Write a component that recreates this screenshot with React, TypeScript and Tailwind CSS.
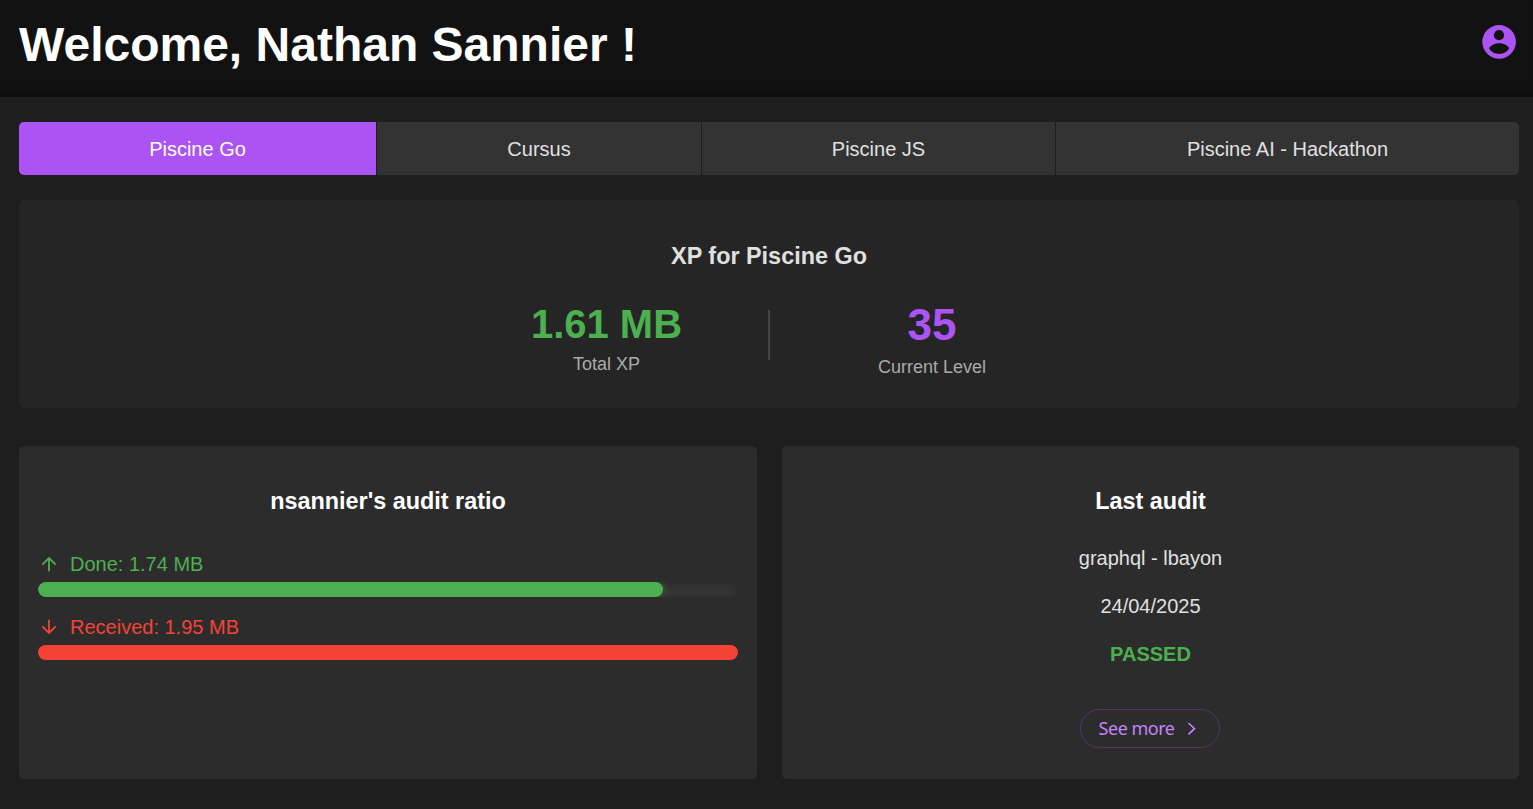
import { MdArrowUpward, MdArrowDownward } from 'react-icons/md';

const tabs = [
  { label: 'Piscine Go', cls: 'w-[358px] bg-[#ab54f3] text-white rounded-l-[5px]' },
  { label: 'Cursus', cls: 'w-[325px] bg-[#333333]' },
  { label: 'Piscine JS', cls: 'w-[354px] bg-[#333333]' },
  { label: 'Piscine AI - Hackathon', cls: 'w-[463px] bg-[#333333] rounded-r-[5px] border-r-0' },
];

export default function App() {
  return (
    <div className="h-[809px] overflow-hidden bg-[#1e1e1e] font-['Liberation_Sans',Arial,sans-serif] text-[#e0e0e0]">
      <header className="flex h-[97px] items-start justify-between bg-[#121212] pr-[14px] pl-[19px] shadow-[inset_0_-10px_10px_-8px_rgba(0,0,0,0.35)]">
        <h1 className="pt-[9px] text-[48px] leading-[72px] font-bold text-white">Welcome, Nathan Sannier !</h1>
        <svg viewBox="0 0 40 40" className="mt-[22px] size-[40px]">
          <circle cx="20.1" cy="19.9" r="16.8" fill="#ab54f3" />
          <circle cx="20" cy="13.2" r="5.1" fill="#121212" />
          <path d="M10 26.3 C12 22.8 16 21.3 20.1 21.3 C24.2 21.3 28.2 22.8 30.2 26.3 C28.2 30 24.2 32 20.1 32 C16 32 12 30 10 26.3Z" fill="#121212" />
        </svg>
      </header>
      <main className="pt-[25px] pr-[14px] pl-[19px]">
        <nav className="flex h-[53px] w-[1500px]">
          {tabs.map((t) => (
            <button key={t.label} className={`border-r border-[#1e1e1e] text-[20px] ${t.cls}`}>{t.label}</button>
          ))}
        </nav>
        <section className="mt-[25px] flex h-[208px] flex-col items-center rounded-[5px] bg-[#252525] pt-[42px]">
          <h2 className="text-[23.4px] leading-[28px] font-bold">XP for Piscine Go</h2>
          <div className="mt-[28px] flex w-[652px]">
            <div className="flex w-[325px] flex-col items-center pl-[2px]">
              <div className="text-[40px] leading-[52px] font-bold text-[#4caf50]">1.61 MB</div>
              <div className="text-[18px] leading-[29px] text-[#aaaaaa]">Total XP</div>
            </div>
            <div className="mt-[12px] h-[50px] w-[2px] bg-[#444444]" />
            <div className="flex w-[325px] flex-col items-center pr-px">
              <div className="text-[44px] leading-[54px] font-bold text-[#ab54f3]">35</div>
              <div className="text-[18px] leading-[31px] text-[#aaaaaa]">Current Level</div>
            </div>
          </div>
        </section>
        <div className="mt-[38px] flex gap-[25px]">
          <section className="h-[333px] w-[738px] rounded-[5px] bg-[#2c2c2c] px-[19px] pt-[41px]">
            <h2 className="text-center text-[23.4px] leading-[28px] font-bold text-white">nsannier's audit ratio</h2>
            <div className="mt-[36px] flex h-[26px] items-center text-[20px] text-[#4caf50]">
              <MdArrowUpward className="mr-[10px] size-[22px]" />Done: 1.74 MB
            </div>
            <div className="mt-[5px] h-[15px] w-[700px] overflow-hidden rounded-full bg-[#333333] shadow-[inset_0_2px_4px_#2a2a2a]">
              <div className="h-full w-[625px] rounded-full bg-[#4caf50] shadow-[0_0_8px_rgba(76,175,80,0.5)]" />
            </div>
            <div className="mt-[17px] flex h-[26px] items-center text-[20px] text-[#f44336]">
              <MdArrowDownward className="mr-[10px] size-[22px]" />Received: 1.95 MB
            </div>
            <div className="mt-[5px] h-[15px] w-[700px] rounded-full bg-[#f44336]" />
          </section>
          <section className="flex h-[333px] w-[737px] flex-col items-center rounded-[5px] bg-[#2c2c2c] pt-[41px]">
            <h2 className="text-[23.4px] leading-[28px] font-bold text-white">Last audit</h2>
            <p className="mt-[29px] text-[20px] leading-[28px]">graphql - lbayon</p>
            <p className="mt-[20px] text-[20px] leading-[28px]">24/04/2025</p>
            <p className="mt-[20px] text-[20px] leading-[28px] font-bold text-[#4caf50]">PASSED</p>
            <button className="mt-[41px] mr-px flex h-[39px] w-[140px] items-center rounded-full border border-[#523667] pl-[17px] font-['Noto_Sans','Open_Sans',sans-serif] text-[18px] text-[#c484fc]">
              <span className="w-[77px] tracking-[-0.5px] whitespace-nowrap">See more</span>
              <svg viewBox="0 0 12 16" className="ml-[11px] h-[16px] w-[12px]" fill="none" stroke="currentColor" strokeWidth="1.6">
                <path d="M2.5 2 L8.5 7.7 L2.5 13.4" />
              </svg>
            </button>
          </section>
        </div>
      </main>
    </div>
  );
}
